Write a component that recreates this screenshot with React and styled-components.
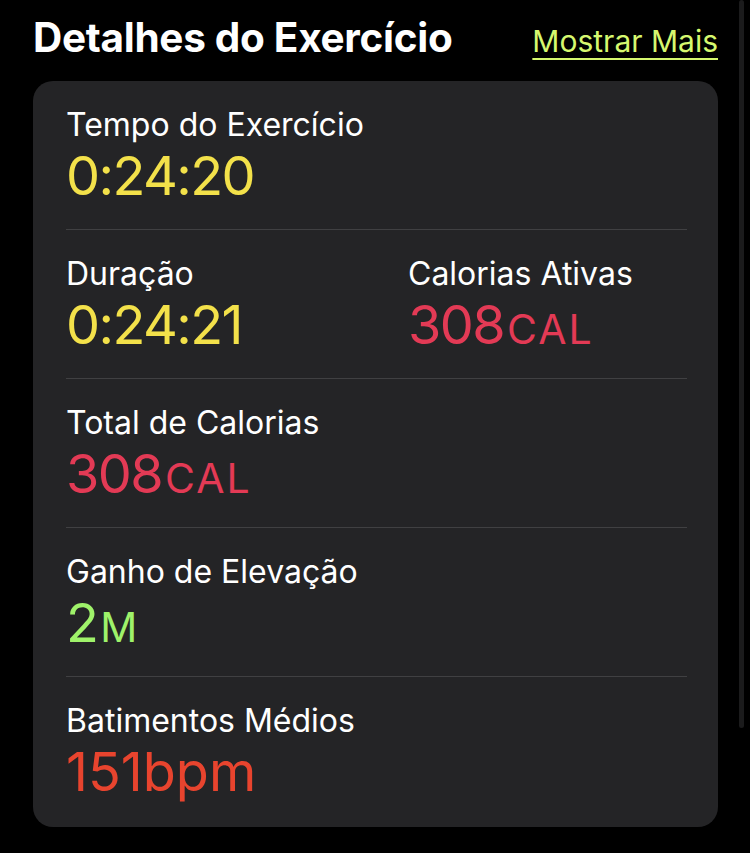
import React from "react"
import styled, { createGlobalStyle } from "styled-components"

const GlobalStyle = createGlobalStyle`
  html, body {
    margin: 0;
    padding: 0;
    background: #000;
  }
  body {
    font-family: Inter, "Noto Sans", sans-serif;
    color: #fff;
  }
`

const Screen = styled.div`
  position: relative;
  width: 750px;
  height: 853px;
  overflow: hidden;
  background: #000;
  padding: 0 32px 0 33px;
  box-sizing: border-box;
`

const Header = styled.div`
  display: flex;
  align-items: baseline;
  justify-content: space-between;
  height: 81px;
  padding-top: 14px;
  box-sizing: border-box;
`

const Title = styled.h2`
  margin: 0;
  font-size: 40.5px;
  line-height: 48px;
  font-weight: 700;
  letter-spacing: -0.3px;
  color: #fff;
`

const MoreLink = styled.a`
  font-size: 30px;
  color: #d6f86f;
  text-decoration: underline;
  text-underline-offset: 6px;
  text-decoration-thickness: 2px;
`

const Card = styled.div`
  background: #242426;
  border-radius: 20px;
  padding: 0 31px 0 33px;
`

const Row = styled.div`
  display: grid;
  grid-template-columns: ${(p) => (p.split ? "342px 1fr" : "1fr")};
  padding-top: 26px;
  box-sizing: border-box;
  border-bottom: ${(p) => (p.last ? "none" : "1px solid #404042")};
  height: ${(p) => (p.last ? "150px" : "149px")};
`

const Metric = styled.div`
  display: flex;
  flex-direction: column;
`

const Label = styled.div`
  font-size: 32px;
  line-height: 36px;
  color: #fff;
`

const Value = styled.div`
  font-size: 54px;
  line-height: 60px;
  margin-top: 3px;
  color: ${(p) => p.color};
  letter-spacing: ${(p) => (p.loose ? "0" : "-1.6px")};
`

const Unit = styled.span`
  font-size: 41px;
  text-transform: uppercase;
  letter-spacing: 2px;
  margin-left: 3px;
`

const ScrollThumb = styled.div`
  position: absolute;
  right: 6px;
  top: 0;
  width: 5px;
  height: 728px;
  border-radius: 3px;
  background: #1b1b1c;
`

const rows = [
  [{ label: "Tempo do Exercício", value: "0:24:20", color: "#f3e14a" }],
  [
    { label: "Duração", value: "0:24:21", color: "#f3e14a" },
    { label: "Calorias Ativas", value: "308", unit: "cal", color: "#e33a55" },
  ],
  [{ label: "Total de Calorias", value: "308", unit: "cal", color: "#e33a55" }],
  [{ label: "Ganho de Elevação", value: "2", unit: "m", color: "#9ff26a" }],
  [{ label: "Batimentos Médios", value: "151bpm", color: "#e8442e", loose: true }],
]

export default function App() {
  return (
    <>
      <GlobalStyle />
      <Screen>
        <Header>
          <Title>Detalhes do Exercício</Title>
          <MoreLink>Mostrar Mais</MoreLink>
        </Header>
        <Card>
          {rows.map((metrics, i) => (
            <Row key={i} split={metrics.length > 1} last={i === rows.length - 1}>
              {metrics.map((m) => (
                <Metric key={m.label}>
                  <Label>{m.label}</Label>
                  <Value color={m.color} loose={m.loose}>
                    {m.value}
                    {m.unit && <Unit>{m.unit}</Unit>}
                  </Value>
                </Metric>
              ))}
            </Row>
          ))}
        </Card>
        <ScrollThumb />
      </Screen>
    </>
  )
}
